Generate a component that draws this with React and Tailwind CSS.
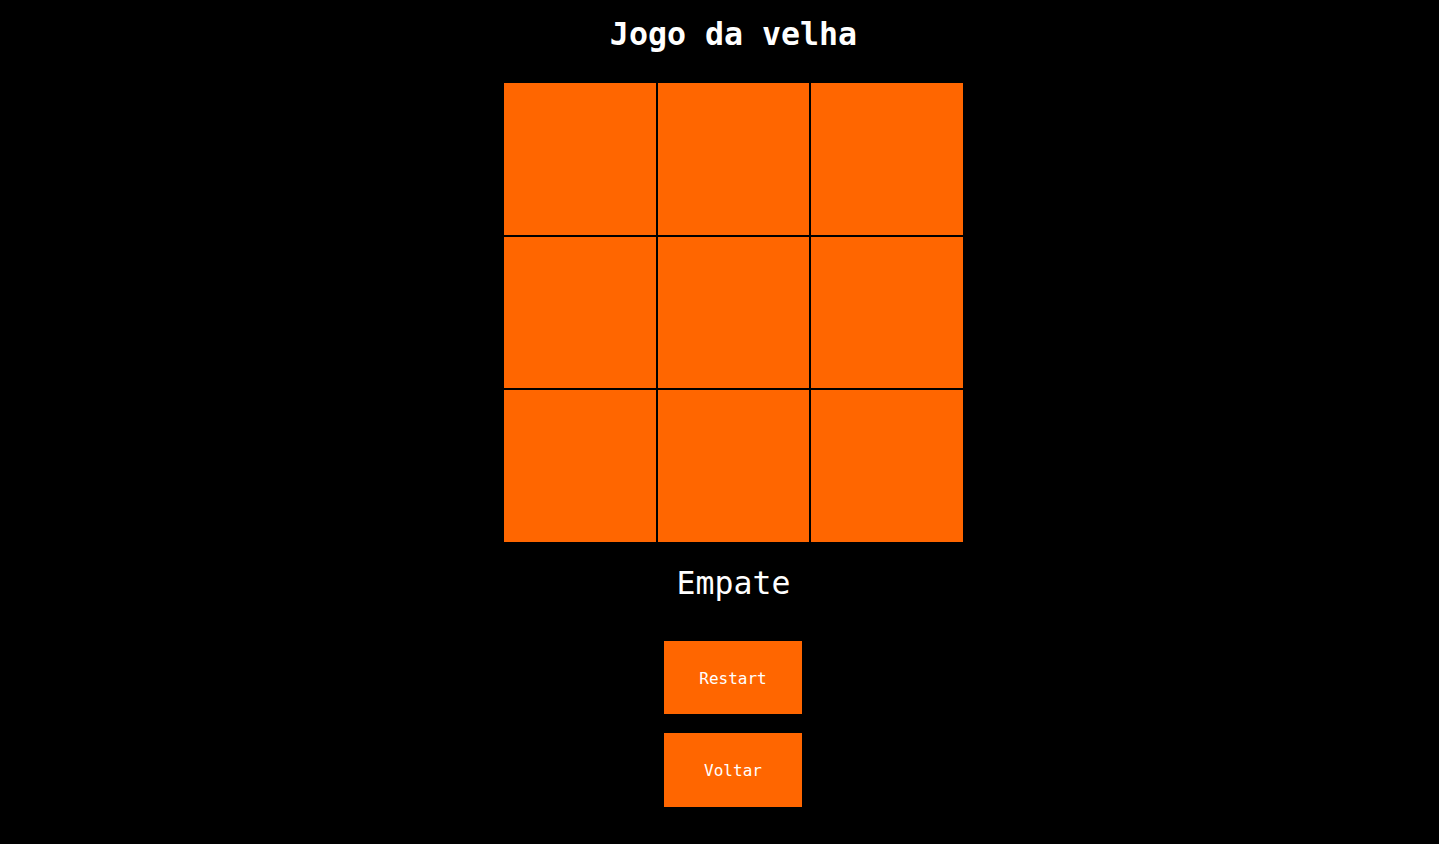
import React from "react";

const App = () => {
  const cells = Array(9).fill(null);

  return (
    <div className="min-h-[844px] w-full bg-black pl-[28px] flex flex-col items-center font-['DejaVu_Sans_Mono',monospace] text-white">
      <h1 className="pt-[14px] text-[31.6px] leading-[40px] font-bold">Jogo da velha</h1>
      <div className="mt-[29px] w-[459px] h-[459px] grid grid-cols-3 grid-rows-3 gap-[2px] bg-black">
        {cells.map((c, i) => (
          <button key={i} className="bg-[#ff6600]"></button>
        ))}
      </div>
      <p className="mt-[21px] text-[31.5px] leading-[40px]">Empate</p>
      <button className="mt-[38px] mr-[1px] w-[138px] h-[73px] pt-[2px] bg-[#ff6600] text-[16px] text-white">
        Restart
      </button>
      <button className="mt-[19px] mr-[1px] w-[138px] h-[74px] pt-[2px] bg-[#ff6600] text-[16px] text-white">
        Voltar
      </button>
    </div>
  );
};

export default App;
